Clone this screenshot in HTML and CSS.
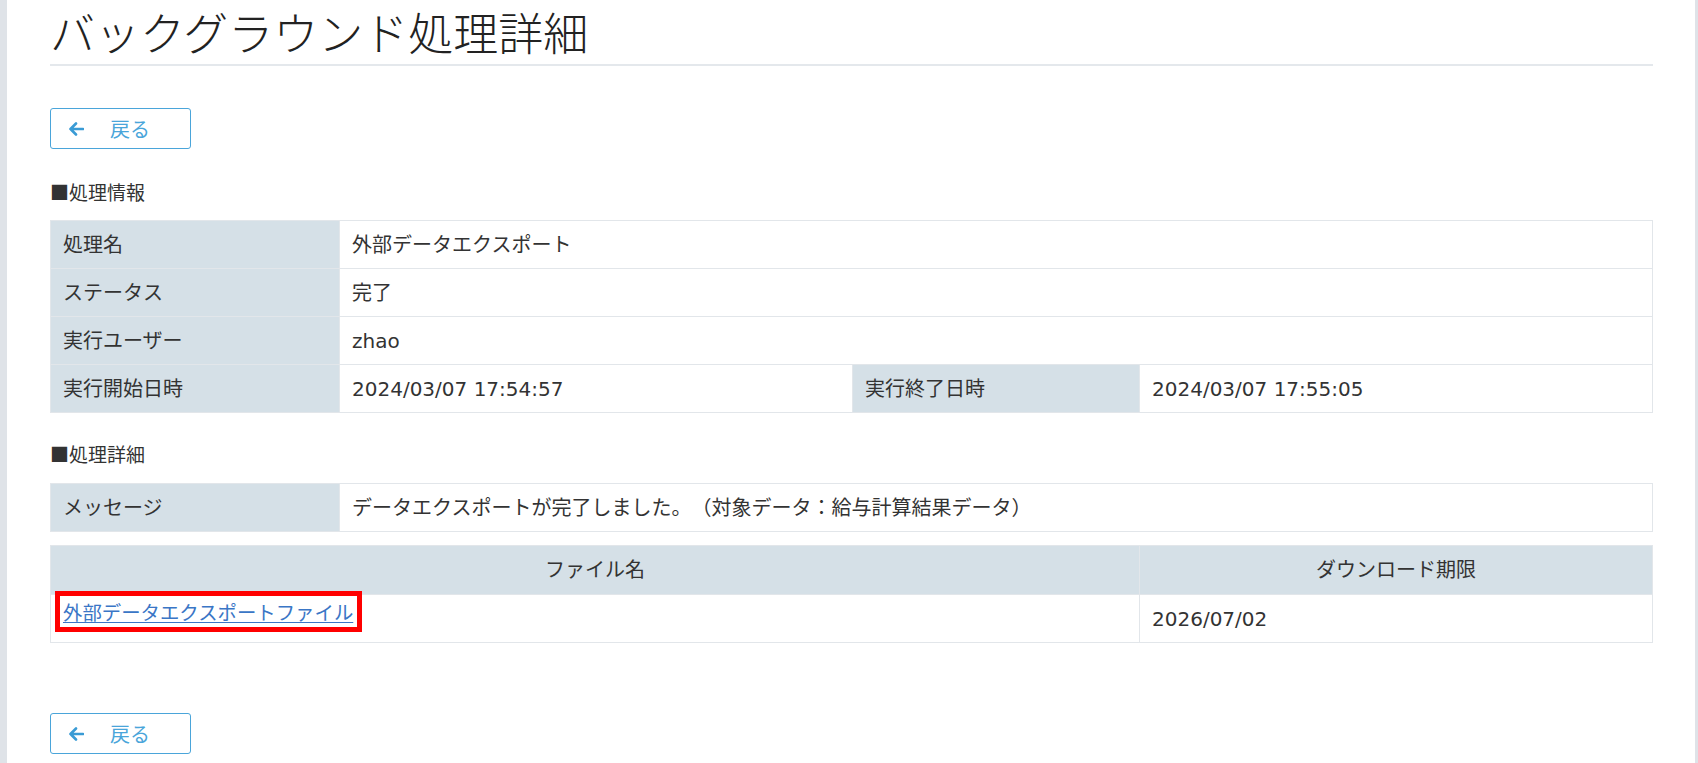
FILE: index.html
```html
<!DOCTYPE html>
<html lang="ja">
<head>
<meta charset="utf-8">
<title>バックグラウンド処理詳細</title>
<link rel="stylesheet" href="styles.css">
</head>
<body>
<div class="frame">
  <main class="content">
    <h1 class="title">バックグラウンド処理詳細</h1>

    <button class="back-btn" type="button">
      <svg class="back-icon" width="16" height="14" viewBox="0 0 16 14" aria-hidden="true">
        <path d="M15 7H2.5M8 1.5L2.5 7L8 12.5" fill="none" stroke="#3a9bd5" stroke-width="2.6" stroke-linecap="round" stroke-linejoin="round"/>
      </svg>
      <span>戻る</span>
    </button>

    <h2 class="section">■処理情報</h2>
    <table class="grid">
      <colgroup>
        <col class="c-label"><col class="c-value"><col class="c-label2"><col class="c-value">
      </colgroup>
      <tr><th>処理名</th><td colspan="3">外部データエクスポート</td></tr>
      <tr><th>ステータス</th><td colspan="3">完了</td></tr>
      <tr><th>実行ユーザー</th><td colspan="3">zhao</td></tr>
      <tr><th>実行開始日時</th><td>2024/03/07 17:54:57</td><th>実行終了日時</th><td>2024/03/07 17:55:05</td></tr>
    </table>

    <h2 class="section second">■処理詳細</h2>
    <table class="grid">
      <colgroup><col class="c-label"><col></colgroup>
      <tr><th>メッセージ</th><td>データエクスポートが完了しました。（対象データ：給与計算結果データ）</td></tr>
    </table>

    <table class="grid files">
      <colgroup><col><col class="c-value"></colgroup>
      <tr><th class="center">ファイル名</th><th class="center">ダウンロード期限</th></tr>
      <tr>
        <td class="link-cell"><span class="mark"><a href="#" class="file-link">外部データエクスポートファイル</a></span></td>
        <td>2026/07/02</td>
      </tr>
    </table>

    <button class="back-btn bottom" type="button">
      <svg class="back-icon" width="16" height="14" viewBox="0 0 16 14" aria-hidden="true">
        <path d="M15 7H2.5M8 1.5L2.5 7L8 12.5" fill="none" stroke="#3a9bd5" stroke-width="2.6" stroke-linecap="round" stroke-linejoin="round"/>
      </svg>
      <span>戻る</span>
    </button>
  </main>
</div>
</body>
</html>
```
FILE: styles.css
```css
html, body {
  margin: 0;
  padding: 0;
  background: #ffffff;
}

body {
  font-family: "DejaVu Sans", "Noto Sans CJK JP", sans-serif;
  color: #333333;
  font-size: 20px;
  text-spacing-trim: space-all;
}

.frame {
  border-left: 7px solid #dfe3e8;
  border-right: 3px solid #dfe3e8;
  min-height: 763px;
  box-sizing: border-box;
  padding: 0 42px 0 43px;
}

.content {
  display: block;
}

.title {
  margin: 0;
  font-family: "Noto Sans CJK JP", sans-serif;
  font-weight: 300;
  font-size: 45px;
  line-height: 64px;
  padding: 0;
  border-bottom: 2px solid #e4e8ec;
  color: #222;
}

.back-btn {
  display: flex;
  align-items: center;
  width: 141px;
  height: 41px;
  margin-top: 42px;
  padding: 0 0 0 17px;
  box-sizing: border-box;
  background: #ffffff;
  border: 1.5px solid #4aa5da;
  border-radius: 3px;
  color: #4aa5da;
  font-family: "Noto Sans CJK JP", sans-serif;
  font-size: 20px;
  cursor: pointer;
}

.back-btn span {
  margin-left: 26px;
  line-height: 1;
}

.back-icon {
  display: block;
  flex: none;
}

.back-btn.bottom {
  margin-top: 70px;
}

.section {
  margin: 31px 0 16px;
  font-family: "Noto Sans CJK JP", sans-serif;
  font-weight: 400;
  font-size: 19px;
  line-height: 24px;
  color: #333;
}

.section.second {
  margin-top: 29px;
  margin-bottom: 17px;
}

.grid {
  width: 100%;
  border-collapse: collapse;
  table-layout: fixed;
  border: 1px solid #e2e6ea;
}

.grid + .grid {
  margin-top: 13px;
}

.c-label { width: 289px; }
.c-label2 { width: 287px; }
.c-value { width: 513px; }

.grid th,
.grid td {
  height: 47px;
  padding: 0 12px;
  border: 1px solid #e2e6ea;
  font-size: 20px;
  line-height: 24px;
  text-align: left;
  vertical-align: middle;
  font-weight: normal;
  white-space: nowrap;
}

.grid th {
  background: #d5e0e7;
  color: #333;
}

.grid td {
  background: #ffffff;
}

.grid th.center {
  text-align: center;
  height: 48px;
}

.grid td.link-cell {
  padding: 0 0 0 4px;
  vertical-align: top;
  line-height: 0;
}

.mark {
  display: inline-block;
  vertical-align: top;
  margin-top: -4px;
  border: 5px solid #ff0000;
  padding: 0 4px 0 3px;
  line-height: 31px;
  font-family: "Noto Sans CJK JP", sans-serif;
  font-size: 19.4px;
}

.file-link {
  color: #3a76c6;
  text-decoration: underline;
  text-underline-offset: 2px;
}
```
